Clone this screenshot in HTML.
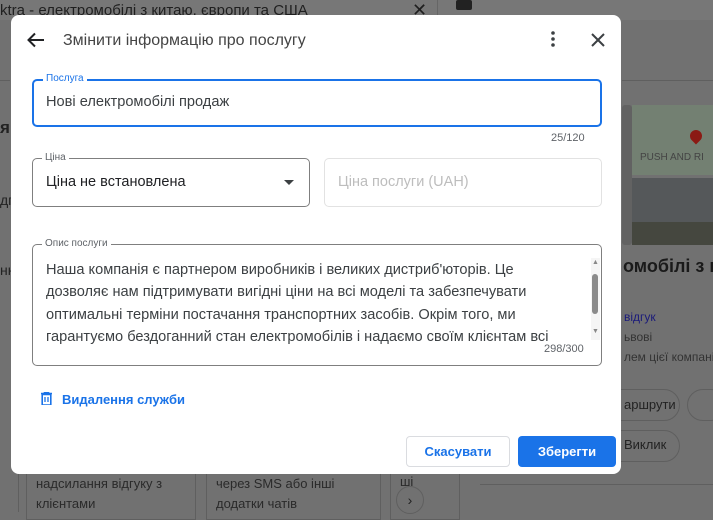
<!DOCTYPE html>
<html><head><meta charset="utf-8"><style>
*{box-sizing:border-box;margin:0;padding:0}
body{width:713px;height:512px;overflow:hidden;background:#717171;font-family:"Liberation Sans",sans-serif;position:relative;color:#202124}
.bg{position:absolute;color:#222;font-size:14px;white-space:nowrap}
.dlg{position:absolute;left:11px;top:15px;width:610px;height:459px;background:#fff;border-radius:8px}
.fs{position:absolute;border:1px solid #7f7f7f;border-radius:5px}
.lab{position:absolute;top:-7px;background:#fff;padding:0 3px;font-size:10px;color:#5f6368;line-height:12px}
.t{position:absolute;font-size:15px;white-space:nowrap}
</style></head><body>
<div class="bg" style="left:0;top:0;width:713px;height:20px;background:#777"></div>
<div class="bg" style="left:0;top:2px;font-size:15px;color:#1f1f1f">ktra - електромобілі з китаю, європи та США</div>
<div class="bg" style="left:412px;top:0;font-size:18px;color:#1f1f1f">✕</div>
<div class="bg" style="left:437px;top:0;width:1px;height:16px;background:#666"></div>
<div class="bg" style="left:456px;top:0;width:16px;height:10px;background:#222;border-radius:2px"></div>
<div class="bg" style="left:622px;top:80px;width:91px;height:1px;background:#5f5f5f"></div>
<div class="bg" style="left:0;top:80px;width:10px;height:1px;background:#5f5f5f"></div>
<div class="bg" style="left:0;top:118px;font-size:17px;font-weight:bold">я</div>
<div class="bg" style="left:0;top:192px">дг</div>
<div class="bg" style="left:0;top:262px">нн</div>
<div class="bg" style="left:622px;top:105px;width:10px;height:140px;background:#626262;border-radius:3px"></div>
<div class="bg" style="left:632px;top:105px;width:81px;height:70px;background:#738072"></div>
<div class="bg" style="left:640px;top:152px;font-size:10px;color:#444">PUSH AND RI</div>
<div class="bg" style="left:690px;top:130px;width:12px;height:12px;background:#8b1a14;border-radius:50% 50% 50% 0;transform:rotate(-45deg)"></div>
<div class="bg" style="left:632px;top:178px;width:81px;height:67px;background:#55585a"></div>
<div class="bg" style="left:632px;top:222px;width:81px;height:23px;background:#45473f"></div>
<div class="bg" style="left:623px;top:256px;font-size:18px;font-weight:bold;color:#1a1a1a">омобілі з к</div>
<div class="bg" style="left:624px;top:310px;font-size:12px;color:#1a1a7a">відгук</div>
<div class="bg" style="left:624px;top:330px;font-size:12px;color:#333">ьвові</div>
<div class="bg" style="left:624px;top:350px;font-size:12px;color:#333">лем цієї компанії</div>
<div class="bg" style="left:605px;top:389px;width:75px;height:32px;border:1px solid #5f5f5f;border-radius:16px"></div>
<div class="bg" style="left:624px;top:397px;font-size:13px">аршрути</div>
<div class="bg" style="left:687px;top:389px;width:40px;height:32px;border:1px solid #5f5f5f;border-radius:16px"></div>
<div class="bg" style="left:605px;top:430px;width:75px;height:32px;border:1px solid #5f5f5f;border-radius:16px"></div>
<div class="bg" style="left:624px;top:437px;font-size:13px">Виклик</div>
<div class="bg" style="left:480px;top:484px;width:233px;height:1px;background:#5f5f5f"></div>
<div class="bg" style="left:18px;top:470px;width:1px;height:42px;background:#5f5f5f"></div>
<div class="bg" style="left:26px;top:470px;width:170px;height:50px;border:1px solid #5f5f5f"></div>
<div class="bg" style="left:36px;top:474px;font-size:13px;line-height:20px;color:#2a2a2a">надсилання відгуку з<br>клієнтами</div>
<div class="bg" style="left:206px;top:470px;width:175px;height:50px;border:1px solid #5f5f5f"></div>
<div class="bg" style="left:216px;top:474px;font-size:13px;line-height:20px;color:#2a2a2a">через SMS або інші<br>додатки чатів</div>
<div class="bg" style="left:390px;top:470px;width:70px;height:50px;border:1px solid #5f5f5f"></div>
<div class="bg" style="left:400px;top:474px;font-size:13px;color:#2a2a2a">ші</div>
<div class="bg" style="left:396px;top:486px;width:28px;height:28px;border:1px solid #5f5f5f;border-radius:50%;text-align:center;line-height:26px">›</div>

<div class="dlg">
 <svg style="position:absolute;left:16px;top:17px" width="18" height="16" viewBox="0 0 18 16"><path d="M17 8H2M8 1.5L1.5 8 8 14.5" fill="none" stroke="#202124" stroke-width="2"/></svg>
 <div class="t" style="left:52px;top:17px;font-size:16px;color:#444">Змінити інформацію про послугу</div>
 <svg style="position:absolute;left:540px;top:16px" width="4" height="16"><circle cx="2" cy="2" r="1.8" fill="#3c4043"/><circle cx="2" cy="8" r="1.8" fill="#3c4043"/><circle cx="2" cy="14" r="1.8" fill="#3c4043"/></svg>
 <svg style="position:absolute;left:580px;top:18px" width="14" height="14"><path d="M1 1L13 13M13 1L1 13" stroke="#3c4043" stroke-width="2"/></svg>

 <div class="fs" style="left:21px;top:64px;width:570px;height:48px;border:2px solid #1a73e8"><span class="lab" style="left:9px;color:#1a73e8;top:-8px">Послуга</span></div>
 <div class="t" style="left:35px;top:79px;color:#3c4043;font-size:14.6px">Нові електромобілі продаж</div>
 <div class="t" style="left:540px;top:117px;font-size:11px;color:#5f6368">25/120</div>

 <div class="fs" style="left:21px;top:143px;width:278px;height:49px"><span class="lab" style="left:9px">Ціна</span></div>
 <div class="t" style="left:35px;top:159px;font-size:14.5px">Ціна не встановлена</div>
 <svg style="position:absolute;left:273px;top:165px" width="10" height="5"><path d="M0 0H10L5 5z" fill="#3c4043"/></svg>
 <div class="fs" style="left:313px;top:143px;width:278px;height:49px;border-color:#e2e2e2"></div>
 <div class="t" style="left:327px;top:159px;color:#bdbdbd;font-size:14.5px">Ціна послуги (UAH)</div>

 <div class="fs" style="left:21px;top:229px;width:570px;height:122px"><span class="lab" style="left:9px">Опис послуги</span></div>
 <div class="t" style="left:35px;top:244px;font-size:14.6px;line-height:22.3px;color:#3c4043;width:550px">Наша компанія є партнером виробників і великих дистриб'юторів. Це<br>дозволяє нам підтримувати вигідні ціни на всі моделі та забезпечувати<br>оптимальні терміни постачання транспортних засобів. Окрім того, ми<br>гарантуємо бездоганний стан електромобілів і надаємо своїм клієнтам всі</div>
 <div style="position:absolute;left:580px;top:243px;width:9px;height:82px;background:#f5f5f5"></div>
 <div style="position:absolute;left:581px;top:259px;width:6px;height:40px;background:#8a8a8a;border-radius:3px"></div>
 <div class="t" style="left:581px;top:244px;font-size:7px;color:#888">▲</div>
 <div class="t" style="left:581px;top:313px;font-size:7px;color:#888">▼</div>
 <div class="t" style="left:533px;top:328px;font-size:11px;color:#5f6368">298/300</div>

 <svg style="position:absolute;left:30px;top:377px" width="11" height="13" viewBox="0 0 11 13"><path d="M0 1.5H11M3.5 1.5V0h4v1.5M1.2 2.5h8.6v10.5H1.2z" fill="none" stroke="#1a73e8" stroke-width="1.6"/><path d="M4 5v5M7 5v5" stroke="#1a73e8" stroke-width="1.3"/></svg>
 <div class="t" style="left:51px;top:377px;font-size:13px;font-weight:bold;color:#1a73e8">Видалення служби</div>

 <div style="position:absolute;left:395px;top:421px;width:104px;height:31px;border:1px solid #dadce0;border-radius:4px;text-align:center;line-height:29px;font-size:13px;font-weight:bold;color:#1a73e8">Скасувати</div>
 <div style="position:absolute;left:507px;top:421px;width:98px;height:31px;background:#1a73e8;border-radius:4px;text-align:center;line-height:31px;font-size:13px;font-weight:bold;color:#fff">Зберегти</div>
</div>
</body></html>
